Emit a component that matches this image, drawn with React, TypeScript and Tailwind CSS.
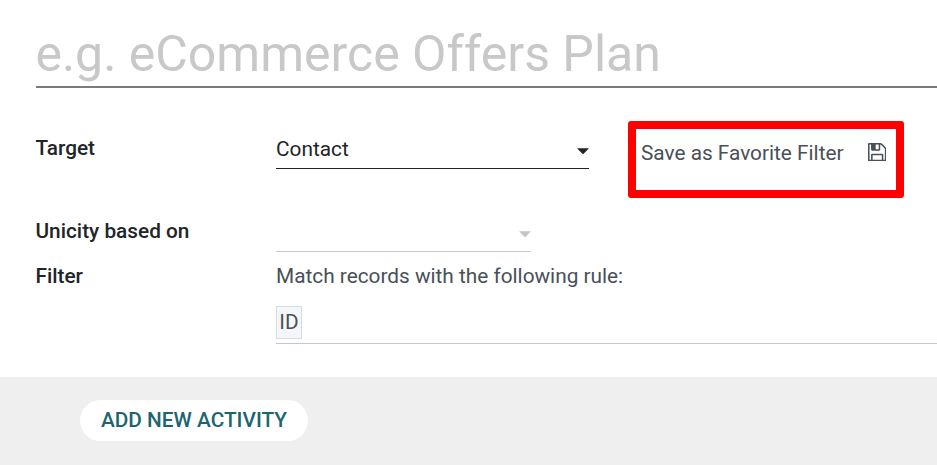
import React from "react";

function Caret({ className }: { className: string }) {
  return (
    <svg width="12" height="7" viewBox="0 0 13 7" className={className} fill="currentColor">
      <path d="M.8 0h11.4q.8 0 .3.6L7.2 6q-.7.6-1.4 0L.5.6Q0 0 .8 0z" />
    </svg>
  );
}

function Floppy() {
  return (
    <svg width="18.4" height="18.4" viewBox="0 128 1536 1536" className="mt-[2px]" fill="currentColor">
      <path d="M384 1536h768v-384H384v384zm896 0h128V640q0-14-10-38.5t-20-34.5l-281-281q-10-10-34-20t-39-10v416q0 40-28 68t-68 28H352q-40 0-68-28t-28-68V256H128v1280h128v-416q0-40 28-68t68-28h832q40 0 68 28t28 68v416zM896 608V288q0-13-9.5-22.5T864 256H672q-13 0-22.5 9.5T640 288v320q0 13 9.5 22.5T672 640h192q13 0 22.5-9.5T896 608zm640 32v928q0 40-28 68t-68 28H96q-40 0-68-28t-28-68V224q0-40 28-68t68-28h928q40 0 88 20t76 48l280 280q28 28 48 76t20 88z" />
    </svg>
  );
}

export default function App() {
  return (
    <div className="flex h-[465px] w-[937px] flex-col overflow-hidden bg-white font-[Roboto,sans-serif] text-[20.8px] leading-6 text-[#495057]">
      <div className="ml-9 mt-5 h-[68px] border-b-2 border-[#7b7b7b] text-[50px] leading-[68px] text-[#c8c8c8]">
        <span className="-ml-[0.6px]">e.g. eCommerce Offers Plan</span>
      </div>
      <div className="ml-9 mt-[33px] flex h-[77px]">
        <div className="mt-[15px] w-60 font-medium text-[#212529]"><span className="-ml-[0.5px]">Target</span></div>
        <div className="mt-[10px] flex h-[38px] w-[313px] items-center justify-between border-b border-[#212529] text-[#212529]">
          <span className="-mt-px">Contact</span>
          <Caret className="mt-[3px]" />
        </div>
        <div className="ml-[39px] flex w-[276px] justify-between rounded-[3px] border-8 border-[#ff0000] pl-[5px] pr-[10px] pt-[12px]">
          <span className="whitespace-nowrap">Save as Favorite Filter</span>
          <Floppy />
        </div>
      </div>
      <div className="ml-9 mt-5 flex h-[34px]">
        <div className="w-60 pt-px font-medium text-[#212529]"><span className="-ml-[0.5px]">Unicity based on</span></div>
        <div className="flex w-[255px] items-center justify-end border-b border-[#c8c8c8] text-[#c4c4c4]">
          <Caret className="-mt-px" />
        </div>
      </div>
      <div className="ml-9 mt-3 flex h-[80px]">
        <div className="w-60 font-medium text-[#212529]"><span className="-ml-[0.5px]">Filter</span></div>
        <div className="flex flex-1 flex-col border-b border-[#c8c8c8]">
          <span>Match records with the following rule:</span>
          <span className="mt-[18px] flex h-[33px] w-[26px] items-center justify-center border border-[#d5dce8] bg-[#f4f6fa] pb-0.5">ID</span>
        </div>
      </div>
      <div className="mt-[33px] flex-1 bg-[#efefef] pl-20 pt-[23px]">
        <button className="flex h-[41px] w-[228px] items-center justify-center rounded-full bg-white pb-px font-medium text-[#1c6570]">ADD NEW ACTIVITY</button>
      </div>
    </div>
  );
}
